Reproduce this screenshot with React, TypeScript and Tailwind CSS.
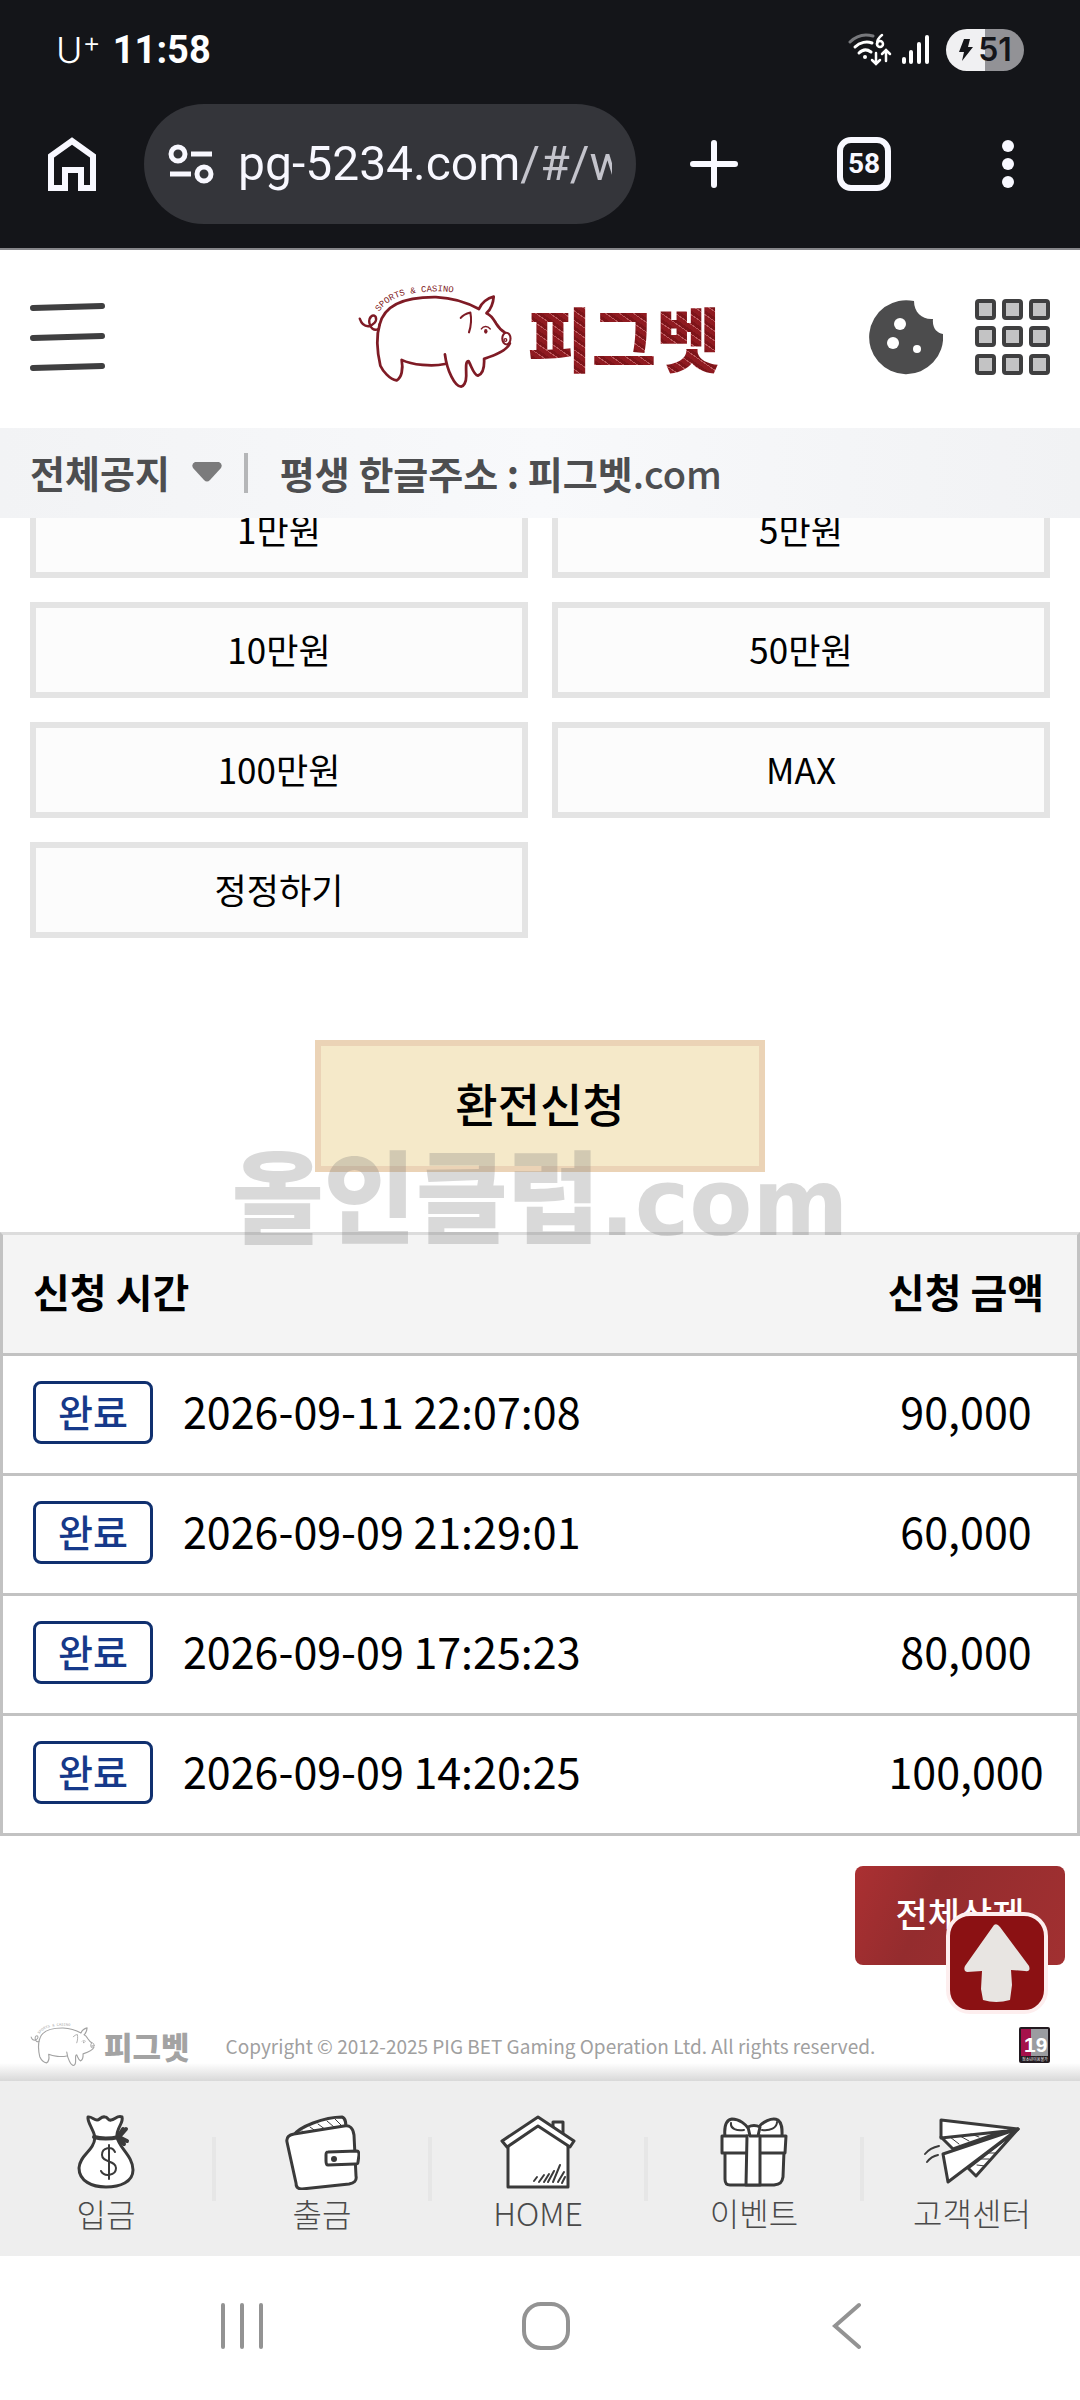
import type { ReactNode } from "react";

const AMOUNTS = [
  "1만원",
  "5만원",
  "10만원",
  "50만원",
  "100만원",
  "MAX",
  "정정하기",
];

const HISTORY = [
  { time: "2026-09-11 22:07:08", amount: "90,000" },
  { time: "2026-09-09 21:29:01", amount: "60,000" },
  { time: "2026-09-09 17:25:23", amount: "80,000" },
  { time: "2026-09-09 14:20:25", amount: "100,000" },
];

function StatusBar() {
  return (
    <div className="flex h-24 items-center justify-between px-14 pt-1 text-white">
      <div className="flex items-center gap-3">
        <span className="flex items-start text-[36px] leading-none font-light">
          U<span className="text-[28px] leading-[20px]">+</span>
        </span>
        <span className="font-[Roboto,sans-serif] text-[38px] leading-none font-bold">11:58</span>
      </div>
      <div className="flex items-center gap-2">
        <svg width="44" height="34" viewBox="0 0 44 34" fill="none" stroke="#fff" strokeWidth="3" strokeLinecap="round">
          <path d="M2 9C9 2 18 1 25 3" stroke="#77787c" />
          <path d="M7 14C12 9 19 8 24 10" />
          <path d="M11 20C15 16 19 16 23 19" />
          <circle cx="17" cy="24" r="2" fill="#fff" stroke="none" />
          <path d="M34 2C30 5 29 8 29 11" strokeWidth="2.5" />
          <circle cx="32" cy="11" r="3" strokeWidth="2.5" />
          <path d="M28 20V30M24 27L28 31L32 27M38 28V18M34 21L38 17L42 21" strokeWidth="2.5" />
        </svg>
        <svg width="30" height="34" viewBox="0 0 30 34" stroke="#fff" strokeWidth="4" strokeLinecap="round">
          <path d="M4 26V29" />
          <path d="M11 19V29" />
          <path d="M19 11V29" />
          <path d="M27 4V29" />
        </svg>
        <div className="ml-2 flex h-[42px] w-[78px] items-center justify-center rounded-full bg-linear-to-r from-[#f0f0f2] from-50% to-[#929296] to-50% text-[#141519]">
          <svg width="16" height="24" viewBox="0 0 16 24" fill="currentColor">
            <path d="M6 1H12L10 9H15L4 23L6 14H1Z" />
          </svg>
          <span className="pl-1 text-[32px] leading-none font-semibold">51</span>
        </div>
      </div>
    </div>
  );
}

function BrowserBar() {
  return (
    <div className="flex items-center pt-2 pb-6 text-[#f8f8ff]">
      <button type="button" aria-label="Home page" className="flex w-36 justify-center">
        <svg width="50" height="56" viewBox="0 0 50 56" fill="none" stroke="currentColor" strokeWidth="6">
          <path d="M4 20L25 5L46 20V52H34V34H18V52H4Z" />
        </svg>
      </button>
      <div className="flex h-[120px] min-w-0 flex-1 items-center gap-6 rounded-full bg-[#34353a] px-6">
        <svg className="shrink-0" width="46" height="40" viewBox="0 0 46 40" fill="none" stroke="currentColor" strokeWidth="5">
          <circle cx="10" cy="10" r="7" />
          <path d="M23 10H44" />
          <path d="M2 30H23" />
          <circle cx="36" cy="30" r="7" />
        </svg>
        <input
          type="text"
          aria-label="Address"
          defaultValue="pg-5234.com/#/w"
          className="h-16 w-full min-w-0 bg-linear-to-r from-[#f8f8ff] from-75% to-[#c4c4cc] to-76% bg-clip-text font-[Roboto,sans-serif] text-[48px] text-transparent outline-none"
        />
      </div>
      <button type="button" aria-label="New tab" className="flex w-[156px] justify-center">
        <svg width="48" height="48" viewBox="0 0 48 48" stroke="currentColor" strokeWidth="6" strokeLinecap="round">
          <path d="M24 3V45M3 24H45" />
        </svg>
      </button>
      <button type="button" className="flex w-36 justify-center">
        <span className="flex h-[54px] w-[54px] items-center justify-center rounded-[14px] border-6 border-[#f8f8ff] font-[Roboto,sans-serif] text-[28px] leading-none font-bold">
          58
        </span>
      </button>
      <button type="button" aria-label="Menu" className="flex w-36 justify-center">
        <svg width="12" height="48" viewBox="0 0 12 48" fill="currentColor">
          <circle cx="6" cy="6" r="6" />
          <circle cx="6" cy="24" r="6" />
          <circle cx="6" cy="42" r="6" />
        </svg>
      </button>
    </div>
  );
}

function Pig({ width }: { width: number }) {
  return (
    <svg
      width={width}
      viewBox="0 0 460 305"
      fill="none"
      stroke="currentColor"
      strokeWidth="8"
      strokeLinecap="round"
      strokeLinejoin="round"
    >
      <path id="arc" d="M64 78C92 38 140 24 200 20C240 17 270 18 310 28" stroke="none" />
      <text fontSize="26" fill="currentColor" stroke="none" fontFamily="Liberation Mono, monospace">
        <textPath href="#arc">SPORTS &amp; CASINO</textPath>
      </text>
      <path d="M66 115C80 55 140 34 230 35C275 37 320 50 355 70C362 52 380 38 398 34C397 50 390 72 377 82C392 88 398 100 405 112C413 125 420 132 430 138" />
      <path d="M445 170C438 190 400 205 370 215C371 235 370 258 352 264C340 262 335 240 325 222C315 222 318 240 318 265C318 285 310 295 303 296C285 296 262 250 256 202" />
      <path d="M256 230C220 238 160 233 130 218C135 245 130 270 115 278C95 275 75 250 68 235C60 200 55 150 66 115" />
      <path d="M8 98C12 110 18 120 32 120C48 118 60 105 54 92C46 85 34 92 36 110C38 125 50 135 62 128" strokeWidth="7" />
      <path d="M302 96C310 85 322 82 330 80C334 100 332 120 326 138" strokeWidth="6" />
      <path d="M362 128C368 119 380 118 388 128" strokeWidth="4" />
      <ellipse cx="375" cy="135" rx="5" ry="7" fill="currentColor" stroke="none" />
      <ellipse cx="435" cy="156" rx="12" ry="17" strokeWidth="6" />
      <circle cx="432" cy="160" r="4" strokeWidth="4" />
    </svg>
  );
}

function SiteHeader() {
  return (
    <header className="flex h-[178px] items-center justify-between bg-white px-[30px] pb-1">
      <button type="button" aria-label="메뉴" className="flex w-[180px]">
        <svg width="75" height="72" viewBox="0 0 75 72" stroke="#3f3f40" strokeWidth="6" strokeLinecap="round">
          <path d="M3 7L72 5" />
          <path d="M3 37L72 35" />
          <path d="M3 67L72 65" />
        </svg>
      </button>
      <a href="#" className="flex items-center gap-3 text-[#7f1b25]">
        <Pig width={158} />
        <span className="bg-[repeating-linear-gradient(35deg,#8f1a20_0_4px,#b9555a_4px_5px,#7d1419_5px_8px)] bg-clip-text text-[70px] leading-[88px] font-black text-transparent">
          피그벳
        </span>
      </a>
      <div className="flex w-[182px] justify-end gap-8">
        <button type="button" aria-label="쿠키">
          <svg width="75" height="76" viewBox="0 0 75 76">
            <path d="M46 2A37 37 0 1 0 75 35C69 34 64 29 65 20C55 21 46 14 46 2Z" fill="#4c4c4d" />
            <circle cx="32" cy="25" r="6" fill="#fff" />
            <circle cx="25" cy="44" r="6" fill="#fff" />
            <circle cx="49" cy="50" r="4" fill="#fff" />
          </svg>
        </button>
        <button type="button" aria-label="전체 메뉴" className="grid grid-cols-3 gap-1.5">
          {Array.from({ length: 9 }, (_, i) => (
            <span key={i} className="size-[21px] rounded-sm border-4 border-[#3f3f40] bg-[#c3c3c4]" />
          ))}
        </button>
      </div>
    </header>
  );
}

function NoticeBar() {
  return (
    <div className="flex h-[90px] items-center bg-linear-to-r from-[#f2f3f5] via-[#f8f9fb] to-[#f1f2f4] px-[30px] text-[38px] leading-none font-bold text-[#4d4e50]">
      <button type="button" className="flex items-center gap-[22px] pb-0.5">
        전체공지
        <svg width="30" height="20" viewBox="0 0 30 20" fill="#7b7b7c">
          <path d="M3 0H27Q31 2 29 6L18 18Q15 21 12 18L1 6Q-1 2 3 0Z" />
        </svg>
      </button>
      <span className="ml-[22px] h-10 w-1 bg-[#b5b6b8]" />
      <a href="#" className="ml-8">
        평생 한글주소 : 피그벳<span className="font-medium">.com</span>
      </a>
    </div>
  );
}

function HistoryTable() {
  return (
    <table className="mt-[60px] w-full border-separate border-spacing-0 border-3 border-[#c2c2c2] border-t-[#dcdcdc] text-[43px] leading-none">
      <thead>
        <tr className="h-[118px] bg-[#f4f4f4] text-[40px]">
          <th className="pb-1.5 pl-[30px] text-left font-bold">신청 시간</th>
          <th className="w-[222px] pb-1.5 font-bold">신청 금액</th>
        </tr>
      </thead>
      <tbody>
        {HISTORY.map((row) => (
          <tr key={row.time} className="h-[120px]">
            <td className="border-t-3 border-[#c2c2c2] pb-1 pl-[30px]">
              <div className="flex items-center gap-[30px]">
                <span className="flex h-[63px] w-[120px] items-center justify-center rounded-lg border-3 border-[#10306f] pb-1 text-[38px] font-medium text-[#16398a]">
                  완료
                </span>
                <span className="pb-1">{row.time}</span>
              </div>
            </td>
            <td className="border-t-3 border-[#c2c2c2] pb-2 text-center">{row.amount}</td>
          </tr>
        ))}
      </tbody>
    </table>
  );
}

function SiteFooter() {
  return (
    <footer className="flex h-[72px] items-center px-[30px]">
      <a href="#" className="flex items-center gap-2 text-[#a3a3a3]">
        <Pig width={66} />
        <span className="text-[31px] leading-none font-black">피그벳</span>
      </a>
      <p className="ml-9 flex-1 text-[19px] leading-none text-[#a0a0a0]">
        Copyright © 2012-2025 PIG BET Gaming Operation Ltd. All rights reserved.
      </p>
      <svg width="31" height="36" viewBox="0 0 31 36">
        <rect width="31" height="36" rx="2" fill="#221a20" />
        <rect x="2" y="2" width="10" height="27" fill="#a5114b" />
        <rect x="12" y="2" width="17" height="27" fill="#9b9ca0" />
        <text x="5" y="25" fontSize="21" fontWeight="bold" fill="#fff" fontFamily="Liberation Sans, sans-serif">19</text>
        <text x="3" y="34" fontSize="4" fill="#fff">청소년이용불가</text>
      </svg>
    </footer>
  );
}

function NavItem({ label, children }: { label: string; children: ReactNode }) {
  return (
    <li className="flex flex-1 items-center not-last:after:h-16 not-last:after:w-1 not-last:after:bg-[#e6e6e6]">
      <a href="#" className="flex flex-1 flex-col items-center pt-3">
        {children}
        <span className="text-[32px] leading-[46px] font-light whitespace-nowrap text-[#4a4a4a]">{label}</span>
      </a>
    </li>
  );
}

const ink = {
  fill: "#fff",
  stroke: "#3a3a3a",
  strokeWidth: 3,
  strokeLinecap: "round",
  strokeLinejoin: "round",
} as const;

function BottomNav() {
  return (
    <nav className="bg-[#eee]">
      <ul className="flex h-[175px] items-center">
        <NavItem label="입금">
          <svg width="60" height="76" viewBox="0 0 60 76" {...ink}>
            <path d="M19 23C17 14 11 8 12 3C15 2 18 6 21 6C24 6 25 2 29 3C32 3 32 7 35 6C39 6 41 1 46 3C48 9 40 14 41 23C43 34 57 42 57 56C57 68 44 73 30 73C16 73 3 67 3 54C4 40 18 38 19 23Z" />
            <path d="M18 23C25 25 34 25 43 23M43 23L50 15M43 23L51 27M43 21L47 15M43 25L48 30" strokeWidth="4" fill="none" />
            <path d="M39 38C36 32 26 33 26 41C26 49 40 46 40 54C40 62 28 63 25 57M33 31V65" fill="none" strokeWidth="2" />
          </svg>
        </NavItem>
        <NavItem label="출금">
          <svg width="76" height="76" viewBox="0 0 76 76" {...ink}>
            <path d="M10 21C15 13 40 3 58 3C62 4 62 10 62 16" />
            <path d="M18 17L24 20M26 13L33 18M34 10L42 16M43 7L50 13M51 5L57 11" strokeWidth="1" />
            <path d="M3 28C2 23 5 21 10 20L60 12C66 11 69 14 70 21L72 62C73 67 70 69 65 70L18 75C14 75 12 73 12 69Z" />
            <path d="M44 38L73 37C75 37 75 39 75 41L74 48C74 50 73 50 71 50L44 51C42 51 42 49 42 47V41C42 39 42 38 44 38Z" />
            <circle cx="50" cy="45" r="3" fill="#3a3a3a" stroke="none" />
          </svg>
        </NavItem>
        <NavItem label="HOME">
          <svg width="76" height="74" viewBox="0 0 76 74" {...ink}>
            <path d="M53 18V7H63V24" />
            <path d="M8 28V72H68V28L38 10Z" />
            <path d="M2 26L38 2L74 26L70 32L38 11L7 32Z" />
            <path d="M34 66L37 62M39 67L44 60M44 67L49 59M48 67L54 56M53 67L60 50M58 67L64 57M62 68L65 62" fill="none" strokeWidth="2" />
          </svg>
        </NavItem>
        <NavItem label="이벤트">
          <svg width="68" height="74" viewBox="0 -2 68 74" {...ink}>
            <path d="M5 34H64L63 60C62 66 60 67 54 68H10C6 68 5 66 5 62Z" />
            <path d="M5 20C4 10 5 3 12 2C20 2 26 8 28 11H38C42 5 52 0 58 3C63 7 62 14 62 20Z" />
            <path d="M24 13C17 14 10 12 11 6M42 13C50 14 57 11 57 5" fill="none" strokeWidth="2" />
            <path d="M2 19H66L65 36H2Z" />
            <path d="M27 19L26 68H40V19" />
            <path d="M28 10C32 8 36 8 40 10L38 19H30Z" />
          </svg>
        </NavItem>
        <NavItem label="고객센터">
          <svg width="98" height="74" viewBox="0 -2 98 74" {...ink}>
            <path d="M95 12L45 51L53 59Z" />
            <path d="M18 20L30 32L84 13Z" />
            <path d="M18 3L95 12L84 14L18 21Z" />
            <path d="M95 12L20 37L25 65Z" />
            <path d="M27 20L36 27M37 19L46 24M48 17L56 20M58 42L66 42M54 48L62 49M65 36L72 36" strokeWidth="1" />
            <path d="M2 37C6 32 11 30 16 29M4 45C7 41 10 39 15 38" fill="none" strokeWidth="2" />
          </svg>
        </NavItem>
      </ul>
    </nav>
  );
}

function SystemNav() {
  return (
    <div className="flex h-[140px] items-center justify-between px-[218px] text-[#939393]">
      <button type="button" aria-label="Recent apps">
        <svg width="46" height="48" viewBox="0 0 46 48" stroke="currentColor" strokeWidth="4" strokeLinecap="round">
          <path d="M5 3V45M24 3V45M43 3V45" />
        </svg>
      </button>
      <button type="button" aria-label="Home" className="pr-1">
        <svg width="50" height="50" viewBox="0 0 50 50" fill="none" stroke="currentColor" strokeWidth="4">
          <rect x="3" y="3" width="44" height="44" rx="17" />
        </svg>
      </button>
      <button type="button" aria-label="Back">
        <svg width="30" height="48" viewBox="0 0 30 48" fill="none" stroke="currentColor" strokeWidth="4" strokeLinecap="round">
          <path d="M27 3L3 24L27 45" />
        </svg>
      </button>
    </div>
  );
}

export default function App() {
  return (
    <div className="bg-white font-['Noto_Sans_CJK_KR',sans-serif] text-black">
      <div className="relative z-10">
        <div className="border-b-2 border-[#86868a] bg-[#141519] font-[Inter,'Noto_Sans_CJK_KR',sans-serif]">
          <StatusBar />
          <BrowserBar />
        </div>
        <SiteHeader />
        <NoticeBar />
      </div>

      <main className="-mt-9">
        <div className="grid grid-cols-2 gap-6 px-[30px]">
          {AMOUNTS.map((label) => (
            <button
              key={label}
              type="button"
              className="h-24 border-6 border-[#e4e4e4] bg-[#fcfcfc] pb-1 text-[35px] leading-none"
            >
              {label}
            </button>
          ))}
        </div>

        <div className="relative mt-[102px] flex justify-center">
          <button
            type="button"
            className="h-[132px] w-[450px] border-6 border-[#ebd3b6] bg-[#f5e9c9] pb-2 text-[46px] leading-none font-medium"
          >
            환전신청
          </button>
          {/* watermark */}
          <div className="pointer-events-none absolute inset-x-0 top-[102px] flex items-baseline justify-center leading-none text-[#767676]/28">
            <span className="text-[100px] font-black">올인클럽</span>
            <span className="font-['DejaVu_Sans'] text-[92px] font-bold">.com</span>
          </div>
        </div>

        <HistoryTable />

        <div className="relative mt-[30px] flex justify-end pr-[15px]">
          <button
            type="button"
            className="h-[99px] w-[210px] rounded-lg bg-linear-115 from-[#ab3032] via-[#942c2e] via-35% to-[#a13031] pb-1.5 text-[35px] leading-none font-medium text-white"
          >
            전체삭제
          </button>
          <a
            href="#"
            aria-label="맨 위로"
            className="absolute top-[46px] right-8 flex size-[102px] items-center justify-center rounded-3xl border-4 border-[#fdeeee] bg-[#8b1113]"
          >
            <svg width="68" height="80" viewBox="0 0 68 80" fill="#e8e5e2">
              <path d="M31 2Q34 0 37 4L66 43Q68 49 62 48L48 47L49 62L47 77Q33 81 20 77L18 66L19 48L4 49Q0 48 2 43Z" />
            </svg>
          </a>
        </div>
      </main>

      <div className="mt-11">
        <SiteFooter />
        <div className="-mt-[18px] h-[18px] bg-linear-to-b from-transparent to-[#d8d8d8]" />
      </div>
      <BottomNav />
      <SystemNav />
    </div>
  );
}
